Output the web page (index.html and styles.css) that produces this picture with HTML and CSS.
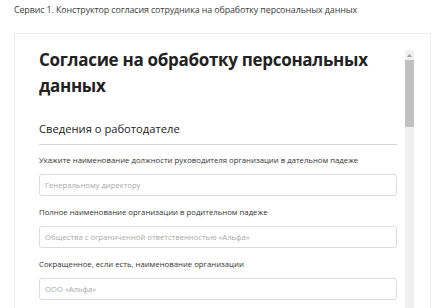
FILE: index.html
```html
<!DOCTYPE html>
<html lang="ru">
<head>
<meta charset="utf-8">
<link rel="stylesheet" href="styles.css">
</head>
<body>
<div class="crumb">Сервис 1. Конструктор согласия сотрудника на обработку персональных данных</div>
<div class="card">
  <div class="pane">
    <div class="content">
      <h1 class="title">Согласие на обработку персональных данных</h1>
      <h2 class="section">Сведения о работодателе</h2>
      <div class="field">
        <div class="label">Укажите наименование должности руководителя организации в дательном падеже</div>
        <div class="input">Генеральному директору</div>
      </div>
      <div class="field">
        <div class="label">Полное наименование организации в родительном падеже</div>
        <div class="input">Общества с ограниченной ответственностью «Альфа»</div>
      </div>
      <div class="field">
        <div class="label">Сокращенное, если есть, наименование организации</div>
        <div class="input">ООО «Альфа»</div>
      </div>
    </div>
    <div class="scrollbar">
      <div class="sb-arrow"><svg width="5" height="3" viewBox="0 0 5 3"><path d="M0 3 L2.5 0 L5 3 Z" fill="#a0a0a0"/></svg></div>
      <div class="sb-thumb"></div>
      <div class="sb-track"></div>
    </div>
  </div>
</div>
</body>
</html>
```
FILE: styles.css
```css
html, body {
  margin: 0;
  padding: 0;
  background: #fff;
  height: 308px;
  overflow: hidden;
}
body {
  font-family: "Open Sans", "Noto Sans", sans-serif;
  color: #333;
}
.crumb {
  font-size: 8.9px;
  line-height: 12px;
  padding: 4px 14px 0 14px;
  color: #3a3a3a;
  letter-spacing: -0.1px;
}
.card {
  margin: 17px 12px 0 14px;
  border: 1px solid #ececec;
  border-bottom: none;
  padding: 16px 16px 0 17px;
  height: 300px;
}
.pane {
  display: flex;
  height: 100%;
}
.content {
  flex: 1;
  padding: 0 8px 0 7px;
}
.title {
  margin: -3px 0 0 0;
  font-size: 17px;
  line-height: 26px;
  font-weight: 700;
  color: #222;
  letter-spacing: -0.3px;
}
.section {
  margin: 23px 0 0 0;
  font-size: 11.2px;
  line-height: 14px;
  font-weight: 500;
  color: #222;
  padding-bottom: 8px;
  border-bottom: 1px solid #d6d6d6;
}
.field {
  margin-top: 9px;
}
.field + .field {
  margin-top: 10px;
}
.label {
  font-size: 7.75px;
  line-height: 12px;
  color: #333;
}
.input {
  margin-top: 8px;
  height: 20px;
  border: 1px solid #dcdcdc;
  border-radius: 3px;
  font-size: 7.7px;
  line-height: 20px;
  padding: 0 5px;
  color: #a8a8a8;
}
.scrollbar {
  width: 9px;
  display: flex;
  flex-direction: column;
  background: #f0f0f0;
}
.sb-arrow {
  height: 10px;
  display: flex;
  align-items: center;
  justify-content: center;
  background: #f0f0f0;
}
.sb-thumb {
  height: 67px;
  background: #c1c1c1;
}
.sb-track {
  flex: 1;
}
```
